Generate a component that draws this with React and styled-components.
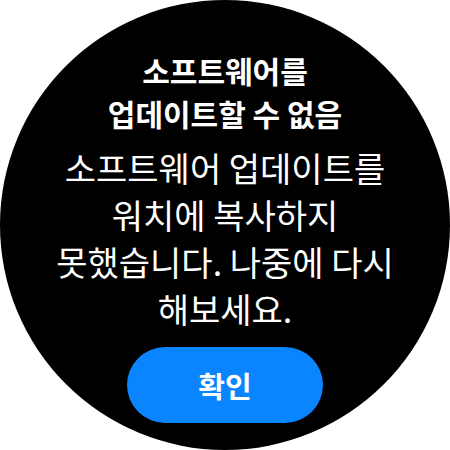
import styled, { createGlobalStyle } from 'styled-components';

const GlobalStyle = createGlobalStyle`
  html, body {
    margin: 0;
    padding: 0;
    background: #fff;
  }
  body {
    font-family: "Noto Sans CJK KR", "Noto Sans", sans-serif;
  }
`;

const Watch = styled.div`
  width: 450px;
  height: 450px;
  border-radius: 50%;
  background: #000;
  color: #fff;
  display: flex;
  flex-direction: column;
  align-items: center;
  box-sizing: border-box;
  padding-top: 49px;
  text-align: center;
`;

const Title = styled.h1`
  margin: 0;
  font-size: 30px;
  font-weight: 700;
  line-height: 43px;
`;

const Message = styled.p`
  margin: 9px 0 0;
  font-size: 34px;
  font-weight: 400;
  line-height: 47px;
  width: 400px;
`;

const ConfirmButton = styled.button`
  margin-top: 15px;
  width: 196px;
  height: 76px;
  border: none;
  border-radius: 38px;
  background: #0a84ff;
  color: #fff;
  font-family: inherit;
  font-size: 29px;
  font-weight: 700;
  cursor: pointer;
`;

const App = () => (
  <>
    <GlobalStyle />
    <Watch>
      <Title>
        소프트웨어를
        <br />
        업데이트할 수 없음
      </Title>
      <Message>
        소프트웨어 업데이트를
        <br />
        워치에 복사하지
        <br />
        못했습니다. 나중에 다시
        <br />
        해보세요.
      </Message>
      <ConfirmButton>확인</ConfirmButton>
    </Watch>
  </>
);

export default App;
